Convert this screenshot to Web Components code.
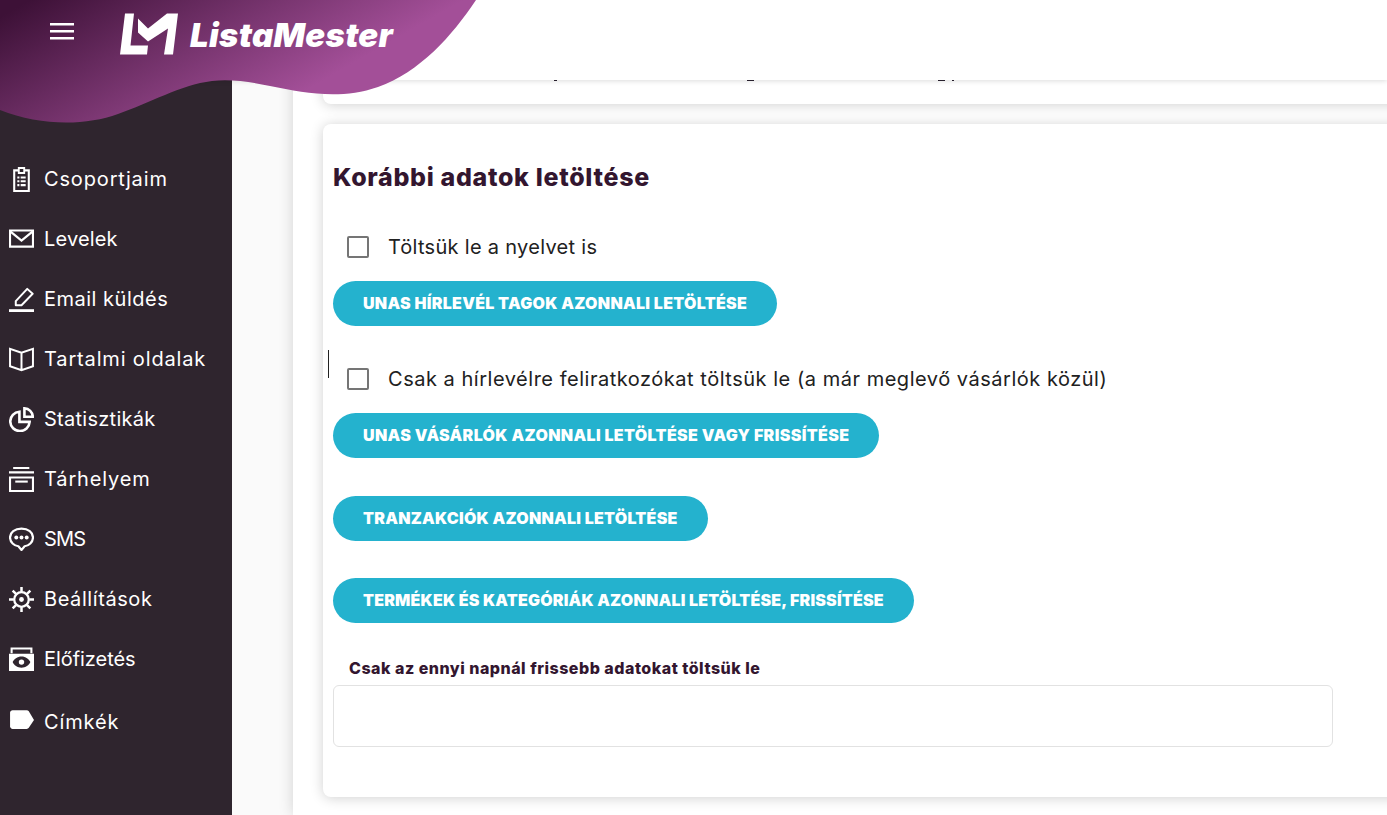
<!DOCTYPE html>
<html lang="hu"><head><meta charset="utf-8"><title>ListaMester</title>
<style>
html,body{margin:0;height:815px;overflow:hidden;background:#fff}
body{font-family:"Inter","Noto Sans",sans-serif}
</style></head><body>
<lm-app>
  <lm-header slot="header"></lm-header>
  <lm-sidebar slot="sidebar">
    <lm-nav icon="clipboard">Csoportjaim</lm-nav>
    <lm-nav icon="mail" style="--ls:.15px">Levelek</lm-nav>
    <lm-nav icon="pen" style="--ls:.5px">Email küldés</lm-nav>
    <lm-nav icon="book">Tartalmi oldalak</lm-nav>
    <lm-nav icon="pie" style="--ls:.27px">Statisztikák</lm-nav>
    <lm-nav icon="storage">Tárhelyem</lm-nav>
    <lm-nav icon="sms" style="--ls:-.8px">SMS</lm-nav>
    <lm-nav icon="gear" style="--ls:.58px">Beállítások</lm-nav>
    <lm-nav icon="money" style="--ls:-.05px">Előfizetés</lm-nav>
    <lm-nav icon="tag" style="--ts:5px">Címkék</lm-nav>
  </lm-sidebar>
  <lm-card class="first"><lm-marks></lm-marks></lm-card>
  <lm-card>
    <lm-title>Korábbi adatok letöltése</lm-title>
    <lm-check style="margin-top:34px;--ls:.3px">Töltsük le a nyelvet is</lm-check>
    <lm-button style="margin-top:16px">UNAS HÍRLEVÉL TAGOK AZONNALI LETÖLTÉSE</lm-button>
    <lm-check style="margin-top:35px;--ls:.52px" caret>Csak a hírlevélre feliratkozókat töltsük le (a már meglevő vásárlók közül)</lm-check>
    <lm-button style="margin-top:16px;--ls:.35px">UNAS VÁSÁRLÓK AZONNALI LETÖLTÉSE VAGY FRISSÍTÉSE</lm-button>
    <lm-button style="margin-top:38px;--ls:.26px">TRANZAKCIÓK AZONNALI LETÖLTÉSE</lm-button>
    <lm-button style="margin-top:37px;--ls:.2px">TERMÉKEK ÉS KATEGÓRIÁK AZONNALI LETÖLTÉSE, FRISSÍTÉSE</lm-button>
    <lm-field label="Csak az ennyi napnál frissebb adatokat töltsük le"></lm-field>
  </lm-card>
</lm-app>
<script>
const ICONS={
clipboard:'<path fill="#fff" fill-rule="evenodd" d="M8.500 0h7v2.200H20V24H4V2.200h4.500V0zm1.800 1.800V4.800h3.400V1.800h-3.400zM6 4.300v17.700h12V4.300h-2.500V6.800h-7V4.300H6z"/><path fill="#fff" d="M8 9h2v2H8zm3.200 0H16v2h-4.800zM8 12.700h2v2H8zm3.200 0H16v2h-4.800zM8 16.400h2v2H8zm3.200 0H16v2h-4.800z"/>',
mail:'<path fill="none" stroke="#fff" stroke-width="2" d="M1 3.400h22v15.400H1z"/><path fill="none" stroke="#fff" stroke-width="2.200" d="M1.500 4.500 12 13 22.500 4.500"/>',
pen:'<path fill="none" stroke="#fff" stroke-width="1.900" stroke-linejoin="round" d="M6.500 13.500 17.500 1.800l5.200 4.700L12 17.500H6.500z"/><path fill="#fff" d="M0 21.300h24V24H0z"/>',
book:'<path fill="none" stroke="#fff" stroke-width="1.900" stroke-linejoin="miter" d="M12 5.500 1 1.800V18.500L12 22.300 23 18.500V1.800L12 5.500zM12 5.500V22"/>',
pie:'<path fill="none" stroke="#fff" stroke-width="2.500" d="M10 4.500a9.300 9.300 0 1 0 9.800 9.800H10z"/><path fill="none" stroke="#fff" stroke-width="2.500" d="M14.800 1.300a8.200 8.200 0 0 1 8 8h-8z"/>',
storage:'<path fill="#fff" d="M4 0h15.500v2H4zM0 4h24v2.200H0z"/><path fill="none" stroke="#fff" stroke-width="2" d="M1 10h22v13H1z"/><path fill="#fff" d="M6 13h12v2H6z"/>',
sms:'<path fill="none" stroke="#fff" stroke-width="2.100" stroke-linejoin="round" d="M12 1.500C5.500 1.500 1 5.200 1 10s4 8 8 8.500L12 22l3-3.500c4-.5 8-3.700 8-8.500S18.500 1.500 12 1.500z"/><circle fill="#fff" cx="7" cy="10" r="1.900"/><circle fill="#fff" cx="12" cy="10" r="1.900"/><circle fill="#fff" cx="17" cy="10" r="1.900"/>',
gear:'<circle cx="12" cy="12" r="7" fill="none" stroke="#fff" stroke-width="2.200"/><circle cx="12" cy="12" r="2.300" fill="#fff"/><path stroke="#fff" stroke-width="2.400" d="M12 0v4.500M12 19.500V24M0 12h4.500M19.500 12H24M3.500 3.500l3.200 3.200M17.300 17.300l3.200 3.200M3.500 20.500l3.200-3.200M17.300 6.700l3.200-3.200"/>',
money:'<path fill="none" stroke="#fff" stroke-width="2" d="M2.500 6V1.500h19V6"/><path fill="#fff" fill-rule="evenodd" d="M0 6.500h24v16.500H0zM12 9C8 9 4.800 11.500 3.500 14.500 4.800 17.500 8 20 12 20s7.200-2.500 8.500-5.500C19.200 11.500 16 9 12 9z"/><circle cx="12" cy="14.500" r="2.600" fill="#fff"/>',
tag:'<path fill="#fff" d="M3.500 3h13.500c.8 0 1.500.4 2 1l5 8.500-5 7.500c-.5.600-1.200 1-2 1H3.500C2.100 21 1 19.900 1 18.500v-13C1 4.100 2.100 3 3.500 3z"/>'
};
function def(name,css,html){
  customElements.define(name,class extends HTMLElement{
    constructor(){super();const r=this.attachShadow({mode:'open'});r.innerHTML='<style>'+css+'</style>'+(typeof html==='function'?'':html);}
    connectedCallback(){if(typeof html==='function'){const s=this.shadowRoot.querySelector('style').outerHTML;this.shadowRoot.innerHTML=s+html(this);}}
  });
}
def('lm-app',`:host{display:grid;grid-template-columns:232px 1fr;height:815px;width:1387px;position:relative;overflow:hidden;background:#fafafa}
.side{display:block;position:relative}
.gutter{padding-left:61px;min-width:0}
.panel{background:#fff;height:815px;box-shadow:0 0 14px rgba(0,0,0,.16);padding:0 0 0 30px;box-sizing:border-box;width:1200px;display:flex;flex-direction:column;gap:20px}
`,`<div class="side"><slot name="sidebar"></slot></div><div class="gutter"><div class="panel"><slot></slot></div></div><slot name="header"></slot>`);
def('lm-header',`:host{display:block;position:absolute;left:0;top:0;width:1387px;height:125px;pointer-events:none}
.bar{position:absolute;left:0;right:0;top:0;height:80px;background:#fff;box-shadow:0 1px 5px rgba(0,0,0,.14)}
svg.wave{position:absolute;left:0;top:0}
.menu{position:absolute;left:50px;top:23px}
.logo{position:absolute;left:120px;top:13px}
.name{position:absolute;left:190px;top:14px;font:italic 900 33px/42px "Inter",sans-serif;color:#fff;letter-spacing:.3px;white-space:nowrap}`,
`<div class="bar"></div>
<svg class="wave" width="480" height="125" viewBox="0 0 480 125"><defs><linearGradient id="g" gradientUnits="userSpaceOnUse" x1="30" y1="0" x2="137" y2="187"><stop offset="0" stop-color="#3d1137"/><stop offset="1" stop-color="#a34f98"/></linearGradient></defs>
<path fill="url(#g)" d="M0 0H476C452 36 420 72 378 87C340 100 305 93 270 86C250 82 232 79 212 81C180 85 150 103 118 114C85 126 40 126 0 110Z"/></svg>
<svg class="menu" width="24" height="17" viewBox="0 0 24 17"><path fill="#fff" d="M0 0h24v2.500H0zM0 7h24v2.500H0zM0 14h24v2.500H0z"/></svg>
<svg class="logo" width="58" height="42" viewBox="0 0 58 41"><path fill="#fff" d="M5 0H14L10.500 32H28L27 41H0z"/><path fill="#fff" d="M18 5 28 15 47 0H58L53 41H44L48 15 28 28 18 19z"/></svg>
<div class="name">ListaMester</div>`);
def('lm-sidebar',`:host{display:flex;flex-direction:column;background:#2f252e;height:815px;box-sizing:border-box;padding-top:149px}`,`<slot></slot>`);
def('lm-nav',`:host{display:flex;align-items:center;height:60px;padding-left:9px;gap:10px;color:#fff;font:400 20px/30px "Inter",sans-serif;letter-spacing:var(--ls,.85px)}
svg{flex:none;width:25px;height:25px}
span{padding-top:var(--ts,0)}`,h=>`<svg viewBox="0 0 24 24">${ICONS[h.getAttribute('icon')]}</svg><span><slot></slot></span>`);
def('lm-marks',`:host{display:flex;height:1px;padding-left:221px;align-items:flex-start}
i{display:block;height:1px;background:#2a2230;flex:none}`,`<i style="width:3px"></i><i style="width:7px;margin-left:190px"></i><i style="width:7px;margin-left:184px"></i><i style="width:2px;margin-left:7px"></i>`);
def('lm-card',`:host{display:block;background:#fff;border-radius:8px 0 0 8px;box-shadow:0 1px 13px rgba(0,0,0,.19);padding:0 0 0 10px;box-sizing:border-box;height:673px;flex:none}
:host(.first){height:104px;padding-top:80px;border-radius:0 0 0 8px}
.c{padding-top:35px}
:host(.first) .c{padding-top:0}`,`<div class="c"><slot></slot></div>`);
def('lm-title',`:host{display:block;font:800 25px/36px "Inter",sans-serif;color:#33162f;letter-spacing:.68px}`,`<slot></slot>`);
def('lm-check',`:host{display:flex;align-items:center;height:36px;padding-left:14px;gap:19px;font:400 20px/28px "Inter",sans-serif;color:#212121;position:relative;letter-spacing:var(--ls,.45px)}
.box{width:18px;height:18px;border:2px solid #757575;border-radius:2px;flex:none;background:#fff}
.caret{position:absolute;left:-5px;top:-11px;width:1px;height:28px;background:#222}`,
h=>`${h.hasAttribute('caret')?'<i class="caret"></i>':''}<span class="box"></span><span><slot></slot></span>`);
def('lm-button',`:host{display:block;width:max-content}
button{display:block;border:0;background:#24b2ce;color:#fff;border-radius:23px;height:45px;padding:0 30px;font:900 16px/45px "Inter",sans-serif;white-space:nowrap;letter-spacing:var(--ls,.3px)}`,`<button><slot></slot></button>`);
def('lm-field',`:host{display:block;margin-top:35px}
label{display:block;padding-left:16px;font:800 16px/22px "Inter",sans-serif;color:#33162f;letter-spacing:.5px;margin-top:-1px}
.in{margin-top:6px;width:1000px;height:62px;box-sizing:border-box;border:1px solid #e2e2e2;border-radius:6px;background:#fff}`,
h=>`<label>${h.getAttribute('label')}</label><div class="in"></div>`);
</script>
</body></html>
